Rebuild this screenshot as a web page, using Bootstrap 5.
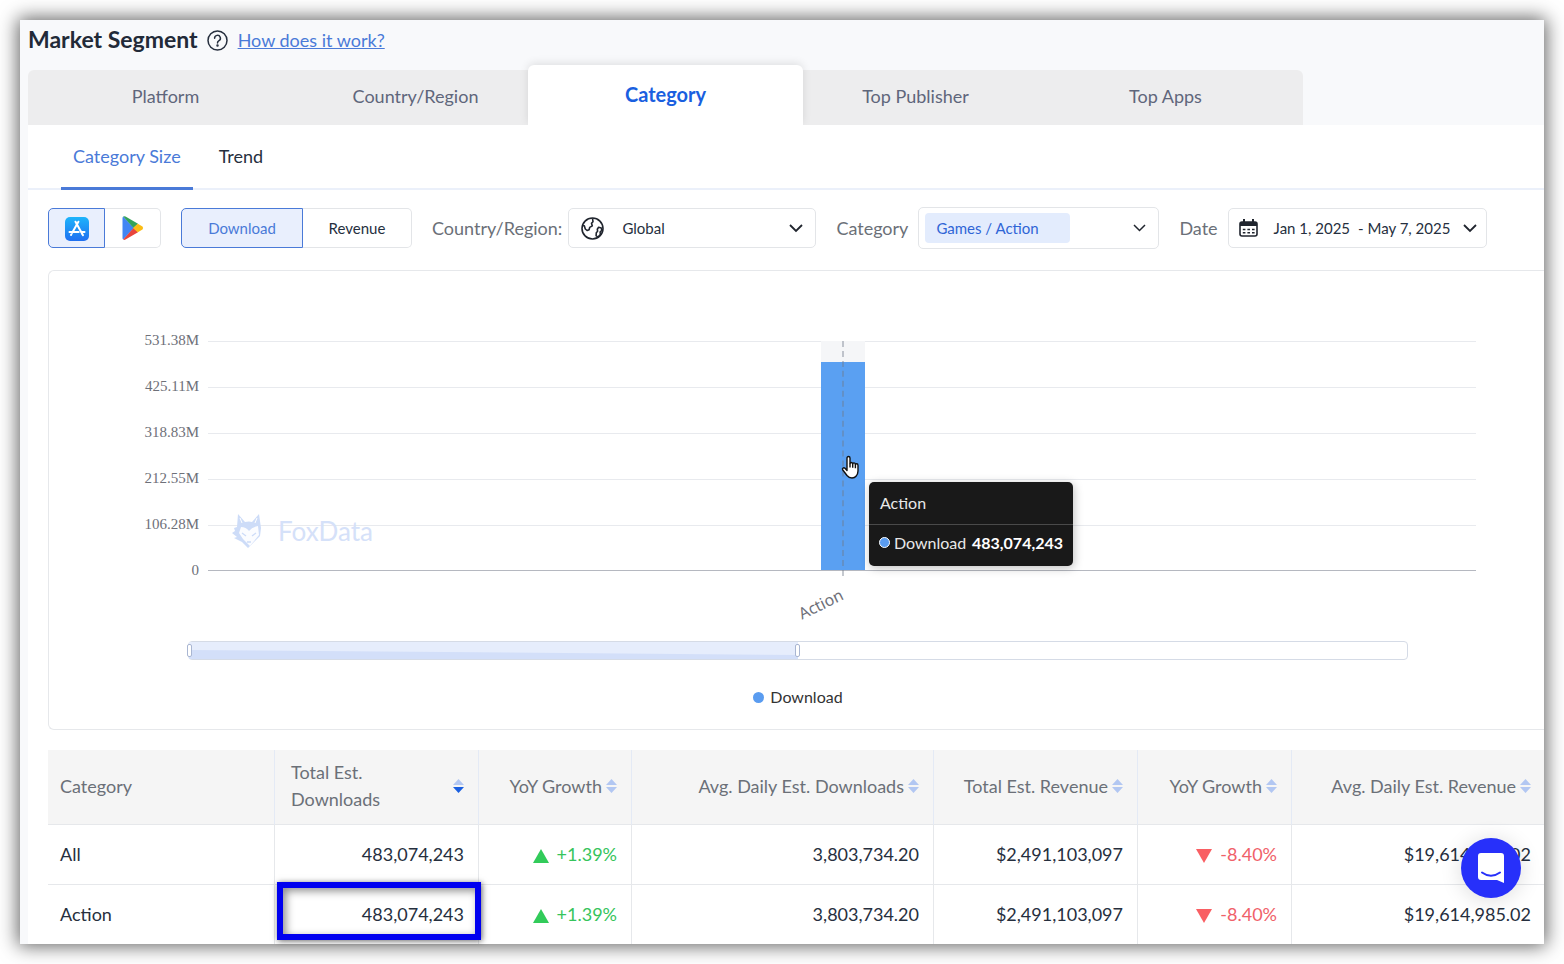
<!DOCTYPE html>
<html lang="en">
<head>
<meta charset="utf-8">
<meta name="viewport" content="width=device-width, initial-scale=1">
<title>Market Segment - FoxData</title>
<link href="https://cdn.jsdelivr.net/npm/bootstrap@5.3.0/dist/css/bootstrap.min.css" rel="stylesheet">
<style>
body { font-family: Lato, "Noto Sans", sans-serif; font-size: 18px; color: #262f3e; padding: 20px; }
.app-frame { background: #f8f9fb; box-shadow: 0 0 18px 2px rgba(0,0,0,.62); }
.page-head { height: 50px; padding: 0 8px; padding-bottom: 10px; }
.page-title { font-size: 23px; font-weight: 700; color: #222a38; margin: 0 9px 0 0; }
.help-link { color: #4a7ad8; font-size: 18px; margin-left: 10px; }
.seg-tabs { margin-left: 8px; height: 55px; width: 1275px; max-width: 100%; background: #ededee; border-radius: 6px 6px 0 0; }
.seg-tab { width: 250px; border: 0; background: none; color: #5f667b; font-size: 18px; padding: 0 0 2px; }
.seg-tab.before { padding-left: 25px; }
.seg-tab.after { padding-right: 25px; }
.seg-tab.active { width: 275px; height: 60px; background: #fff; color: #1a5fe0; font-size: 20px; font-weight: 700; border-radius: 6px 6px 0 0; box-shadow: 0 -2px 8px rgba(0,0,0,.1); clip-path: inset(-10px -10px 0 -10px); }
.panel { margin-left: 8px; background: #fff; }
.sub-tabs { height: 65px; border-bottom: 2px solid #ebf0fa; padding-left: 33px; gap: 14px; }
.sub-tab { border: 0; border-bottom: 3px solid transparent; background: none; padding: 0 12px; font-size: 18px; color: #262f3e; height: 65px; }
.sub-tab.active { color: #4a7ad8; border-color: #4a7ad8; }
.content { padding-left: 20px; }
.filters { padding: 17px 0 21px; font-size: 15px; }
.filters .btn-set { margin-right: 20px; }
.filters .field-label { font-size: 18px; color: #6b7078; white-space: nowrap; margin-right: 10px; }
.filters .field-label.tight { margin-right: 6px; }
.seg-btn { height: 40px; border: 1px solid #e3e5e8; background: #fff; color: #262f3e; font-size: 15px; padding: 0; }
.seg-btn.on { background: #e9effd; border-color: #4a7ad8; color: #4a7ad8; }
.seg-btn:first-child { border-radius: 5px 0 0 5px; }
.seg-btn:last-child { border-radius: 0 5px 5px 0; border-left: 0; }
.store-btn { width: 56px; }
.store-btn.on { width: 57px; }
.dl-btn { width: 122px; }
.rev-btn { width: 109px; }
.field-box { border: 1px solid #e3e5e8; border-radius: 5px; background: #fff; height: 40px; color: #262f3e; font-size: 15px; }
.field-box.country-box, .field-box.cat-box, .field-box.date-box { flex-shrink: 0; }
.plain-select { appearance: none; border: 0; background: none; color: inherit; outline: 0; }
.country-box { width: 248px; padding: 0 12px; gap: 18px; margin-right: 20px; }
.cat-box { width: 241px; height: 42px; padding: 0 12px 0 6px; margin-right: 20px; }
.chip-select { width: 145px; height: 30px; border-radius: 4px; background: #e3ecfd; color: #2f65d6; padding: 0 11px; }
.date-box { width: 259px; padding: 0 9px 0 10px; }
.chart-card { height: 460px; border: 1px solid #e6e8eb; border-right: 0; border-radius: 6px 0 0 6px; padding: 70px 68px 0 90px; }
.y-axis { width: 61px; height: 230px; font: 15px/18px "Liberation Serif", serif; color: #6e7079; padding-right: 1px; }
.y-axis div, .grid-row { height: 46px; }
.y-axis { margin-top: -10px; margin-bottom: 10px; }
.plot { height: 230px; }
.grid-row { border-top: 1px solid #e8eaee; }
.grid-row.base { border-bottom: 1px solid #b5b8c0; }
.bar-band { width: 44px; height: 229px; left: calc(50% - 21px); top: 0; background: #f5f6f8; }
.bar-fill { background: #5aa0f2; width: 100%; }
.bar-pointer { left: 21px; top: 0; height: 235px; border-left: 2px dashed rgba(110,120,135,.4); }
.bar-label { left: calc(50% - 45px); top: 253px; font: 16px/20px "Noto Sans", sans-serif; color: #6e7079; transform: rotate(-26deg); }
.hand { left: calc(50% - 1px); top: 114px; }
.tip { left: calc(50% + 27px); top: 141px; width: 204px; height: 84px; background: #191919; color: #e8e8e8; font-size: 16px; border-radius: 5px; box-shadow: 1px 2px 10px rgba(0,0,0,.25); }
.tip-head { height: 43px; border-bottom: 1px solid #4a4a4a; padding: 0 11px; }
.tip-body { height: 35px; padding: 0 10px; }
.tip-body strong { color: #fff; }
.dot { width: 11px; height: 11px; border-radius: 50%; background: #5a9cf0; display: inline-block; }
.tip .dot { border: 1px solid #fff; margin-right: 4px; }
.watermark { left: 24px; top: 170px; color: #d5e1f9; font-size: 26px; line-height: 40px; gap: 14px; }
.zoom-bar { margin: 70px 68px 0 49px; height: 19px; border: 1px solid #d5dbe6; border-radius: 4px; }
.zoom-fill { width: 50%; height: 17px; background: #e6edfc; }
.zoom-area { height: 9px; top: 8px; left: 0; right: 0; background: #d3dff9; clip-path: polygon(0 0, 100% 55%, 100% 100%, 0 100%); }
.zoom-handle { width: 5px; height: 13px; top: 2px; border: 1px solid #a9b6d2; background: #fff; border-radius: 2px; }
.zoom-handle.at-start { left: -2px; }
.zoom-handle.at-end { right: -2px; }
.legend-row { margin: 26px 68px 0 49px; font-size: 16px; line-height: 22px; gap: 6px; color: #333; }
.seg-table { table-layout: fixed; width: 100%; margin-top: 20px; border-collapse: separate; border-spacing: 0; }
.seg-table th { height: 75px; background: #f5f5f5; color: #6b7078; font-weight: 400; line-height: 27px; border-bottom: 1px solid #e6e8eb; border-right: 1px solid #e4eaf5; padding: 0 14px 2px 12px; white-space: nowrap; }
.seg-table td { height: 60px; border-bottom: 1px solid #e6e8eb; border-right: 1px solid #e6e8eb; padding: 0 14px 1px 12px; text-align: right; }
.seg-table tr:last-child td { height: 59px; border-bottom: 0; }
.seg-table td:first-child { text-align: left; }
.seg-table th:last-child, .seg-table td:last-child { border-right: 0; padding-right: 13px; }
.sort-btn { border: 0; background: none; padding: 0; color: inherit; width: 100%; text-align: right; display: flex; align-items: center; justify-content: flex-end; gap: 4px; }
.up-text { color: #36c45c; }
.down-text { color: #f0616a; }
.cell-mark { border: 6px solid #0000f0; left: 2px; top: -3px; right: -3px; height: 58px; box-shadow: 1px 1px 6px rgba(0,0,0,.6), inset 3px 3px 8px rgba(0,0,0,.45); pointer-events: none; }
.chat-btn { width: 60px; height: 60px; right: 23px; bottom: 46px; border: 0; padding: 0; border-radius: 50%; background: #2730fa; box-shadow: 0 2px 22px rgba(0,0,0,.14); }
</style>
</head>
<body>
<main class="app-frame position-relative">
  <header class="page-head d-flex align-items-center">
    <h1 class="page-title">Market Segment</h1>
    <svg width="21" height="21" viewBox="0 0 21 21" fill="none" stroke="#262f3e" stroke-width="1.5" stroke-linecap="round"><circle cx="10.500" cy="10.500" r="9.500"/><path d="M7.600 8.300a2.900 2.900 0 1 1 4.400 2.400c-1 .6-1.500 1.100-1.500 2.200"/><circle cx="10.500" cy="15.500" r=".5" fill="#262f3e"/></svg>
    <a class="help-link" href="#">How does it work?</a>
  </header>
  <nav class="seg-tabs d-flex align-items-end" aria-label="Segment">
    <button class="seg-tab before h-100">Platform</button>
    <button class="seg-tab before h-100">Country/Region</button>
    <button class="seg-tab active">Category</button>
    <button class="seg-tab after h-100">Top Publisher</button>
    <button class="seg-tab after h-100">Top Apps</button>
  </nav>
  <section class="panel">
    <div class="sub-tabs d-flex">
      <button class="sub-tab active">Category Size</button>
      <button class="sub-tab">Trend</button>
    </div>
    <div class="content">
      <div class="filters d-flex align-items-center">
        <div class="btn-set d-flex">
          <button class="seg-btn store-btn on" aria-label="App Store">
            <svg width="24" height="24" viewBox="0 0 24 24"><defs><linearGradient id="sky" x2="0" y2="1"><stop stop-color="#1db4fb"/><stop offset="1" stop-color="#1f6ff0"/></linearGradient></defs><rect width="24" height="24" rx="5" fill="url(#sky)"/><g stroke="#fff" stroke-width="2" stroke-linecap="round" fill="none"><path d="M10.500 4.700l6.800 12.200"/><path d="M13.400 4.700L7.200 15.700"/><path d="M4.500 15h9.200M16.700 15h2.800"/><path d="M6 18l.4-.7M17.600 17.500l.4.700"/></g></svg>
          </button>
          <button class="seg-btn store-btn" aria-label="Google Play">
            <svg width="24" height="26" viewBox="0 0 24 26"><path d="M2.200 1.500Q1.500 2 1.500 3v20q0 1 .7 1.500L13 13z" fill="#4285f4"/><path d="M2.200 1.500Q3.200.8 4.500 1.500L17 8.800 12.500 13z" fill="#34a35a"/><path d="M2.200 24.500q1 .8 2.300 0L17 17.200 12.500 13z" fill="#e8453c"/><path d="M16.800 8.700l4.700 2.900q1.300 1.400 0 2.800l-4.700 2.900L12 13z" fill="#fbbc14"/></svg>
          </button>
        </div>
        <div class="btn-set d-flex">
          <button class="seg-btn dl-btn on">Download</button>
          <button class="seg-btn rev-btn">Revenue</button>
        </div>
        <label class="field-label tight" for="country">Country/Region:</label>
        <div class="field-box country-box d-flex align-items-center">
          <svg class="flex-shrink-0" width="23" height="23" viewBox="0 0 23 23" fill="none" stroke="#20252e" stroke-width="1.600" stroke-linejoin="round"><circle cx="11.500" cy="11.500" r="10.500"/><path d="M1.300 8.500l2 .3 1 3.200 1.800 1.500 2-.8.600-2.300 2.600-1.500-.8-2.600 1.500-1.600-.5-3.300"/><path d="M17.600 10.300l2.700.7.500 2.400-1.700 1.600.3 2.500-2.300 2.600-2-1.400.2-3 1.300-1.500-.3-2z"/></svg>
          <select class="plain-select flex-grow-1" id="country"><option>Global</option></select>
          <svg width="14" height="9" viewBox="0 0 14 9" fill="none" stroke="#20252e" stroke-width="1.800"><path d="M1 1l6 6 6-6"/></svg>
        </div>
        <label class="field-label" for="cat">Category</label>
        <div class="field-box cat-box d-flex align-items-center justify-content-between">
          <select class="plain-select chip-select" id="cat"><option>Games / Action</option></select>
          <svg width="13" height="8" viewBox="0 0 13 8" fill="none" stroke="#20252e" stroke-width="1.500"><path d="M1 1l5.500 5.500L12 1"/></svg>
        </div>
        <label class="field-label" for="date">Date</label>
        <button class="field-box date-box d-flex align-items-center" id="date">
          <svg class="me-3" width="19" height="18" viewBox="0 0 19 18"><rect x="1" y="3" width="17" height="14" rx="2" fill="none" stroke="#20252e" stroke-width="1.600"/><path d="M1 3h17v4H1zM4 0h2v4H4zM13 0h2v4h-2z" fill="#20252e"/><path d="M3.800 10.500h11.800M3.800 13.700h11.800" stroke="#20252e" stroke-width="1.500" stroke-dasharray="2.600 2"/></svg>
          <span class="me-2">Jan 1, 2025</span><span>- May 7, 2025</span>
          <svg class="ms-auto" width="14" height="9" viewBox="0 0 14 9" fill="none" stroke="#20252e" stroke-width="1.800"><path d="M1 1l6 6 6-6"/></svg>
        </button>
      </div>

      <div class="chart-card">
        <div class="d-flex">
          <div class="y-axis text-end"><div>531.38M</div><div>425.11M</div><div>318.83M</div><div>212.55M</div><div>106.28M</div><div>0</div></div>
          <div class="plot flex-grow-1 position-relative ms-2">
            <div class="position-absolute watermark d-flex align-items-center">
              <svg width="32" height="36" viewBox="0 0 32 36" fill="none" stroke="#cddcf8" stroke-linejoin="round"><path d="M6 1l7 8q4-1 7 0l7-8 2 14-1 8-6 6-6 6-6-6-8-4 3-1-5-4 3-2-1-3 3-1z" fill="#cddcf8" stroke="none"/><path d="M9 14q5 0 8 4 3-4 9-5l1 9-9 11-7-7-4-6z" fill="#fbfcff" stroke="none"/><path d="M10 20l4 3M24 20l-4 3M15 29h4" stroke-width="1.300"/><path d="M8 5l2 5M25 5l-2 5" stroke="#fff"/></svg>
              <span>FoxData</span>
            </div>
            <div class="grid-row"></div><div class="grid-row"></div><div class="grid-row"></div><div class="grid-row"></div><div class="grid-row base"></div>
            <div class="position-absolute bar-band d-flex align-items-end"><div class="bar-fill" style="height:91%"></div><div class="position-absolute bar-pointer"></div></div>
            <div class="position-absolute bar-label">Action</div>
            <svg class="position-absolute hand" width="20" height="26" viewBox="0 0 20 26" fill="#fff" stroke="#111" stroke-width="1.400" stroke-linejoin="round"><path d="M6 15.500V3q0-1.500 1.500-1.500T9 3v5.500q.2-1 1.300-1t1.400 1.300q.3-.9 1.300-.9 1.200 0 1.400 1.500.3-.6 1.300-.6 1.300 0 1.300 1.700V16q0 3-2 5.300-1.300 1.700-4 1.700-3 0-5-2.500L1.800 15q-.8-1.200.2-1.900t2 .2z"/><path d="M9 8.500v4M11.700 8.800v4M14.400 9.600v3.600" fill="none"/></svg>
            <div class="position-absolute tip">
              <div class="tip-head d-flex align-items-center">Action</div>
              <div class="tip-body d-flex align-items-center"><span class="dot"></span>Download<strong class="ms-auto">483,074,243</strong></div>
            </div>
          </div>
        </div>
        <div class="zoom-bar position-relative"><div class="zoom-fill position-relative"><div class="position-absolute zoom-area"></div><div class="position-absolute zoom-handle at-start"></div><div class="position-absolute zoom-handle at-end"></div></div></div>
        <div class="legend-row d-flex justify-content-center align-items-center"><span class="dot"></span>Download</div>
      </div>

      <table class="seg-table">
        <colgroup><col style="width:227px"><col style="width:204px"><col style="width:153px"><col style="width:302px"><col style="width:204px"><col style="width:154px"><col style="width:252px"></colgroup>
        <thead><tr>
          <th>Category</th>
          <th><button class="sort-btn justify-content-between"><span class="text-start ms-1">Total Est.<br>Downloads</span><svg width="11" height="16" viewBox="0 0 11 16"><path d="M0 7l5.500-6L11 7z" fill="#b2c7f2"/><path d="M0 9l5.500 6L11 9z" fill="#1a5fe0"/></svg></button></th>
          <th><button class="sort-btn">YoY Growth<svg width="11" height="16" viewBox="0 0 11 16" fill="#b2c7f2"><path d="M0 7l5.500-6L11 7zM0 9l5.500 6L11 9z"/></svg></button></th>
          <th><button class="sort-btn">Avg. Daily Est. Downloads<svg width="11" height="16" viewBox="0 0 11 16" fill="#b2c7f2"><path d="M0 7l5.500-6L11 7zM0 9l5.500 6L11 9z"/></svg></button></th>
          <th><button class="sort-btn">Total Est. Revenue<svg width="11" height="16" viewBox="0 0 11 16" fill="#b2c7f2"><path d="M0 7l5.500-6L11 7zM0 9l5.500 6L11 9z"/></svg></button></th>
          <th><button class="sort-btn">YoY Growth<svg width="11" height="16" viewBox="0 0 11 16" fill="#b2c7f2"><path d="M0 7l5.500-6L11 7zM0 9l5.500 6L11 9z"/></svg></button></th>
          <th><button class="sort-btn">Avg. Daily Est. Revenue<svg width="11" height="16" viewBox="0 0 11 16" fill="#b2c7f2"><path d="M0 7l5.500-6L11 7zM0 9l5.500 6L11 9z"/></svg></button></th>
        </tr></thead>
        <tbody>
          <tr><td>All</td><td>483,074,243</td>
            <td class="up-text"><svg class="me-2" width="16" height="14" viewBox="0 0 16 14"><path d="M0 14L8 0l8 14z" fill="#32cb5a"/></svg>+1.39%</td>
            <td>3,803,734.20</td><td>$2,491,103,097</td>
            <td class="down-text"><svg class="me-2" width="16" height="14" viewBox="0 0 16 14"><path d="M0 0l8 14 8-14z" fill="#f95f63"/></svg>-8.40%</td>
            <td>$19,614,985.02</td></tr>
          <tr><td>Action</td><td class="position-relative">483,074,243<div class="position-absolute cell-mark"></div></td>
            <td class="up-text"><svg class="me-2" width="16" height="14" viewBox="0 0 16 14"><path d="M0 14L8 0l8 14z" fill="#32cb5a"/></svg>+1.39%</td>
            <td>3,803,734.20</td><td>$2,491,103,097</td>
            <td class="down-text"><svg class="me-2" width="16" height="14" viewBox="0 0 16 14"><path d="M0 0l8 14 8-14z" fill="#f95f63"/></svg>-8.40%</td>
            <td>$19,614,985.02</td></tr>
        </tbody>
      </table>
    </div>
  </section>
  <button class="chat-btn position-absolute" aria-label="Open chat">
    <svg width="28" height="32" viewBox="0 0 28 32"><path d="M4 1h20q3 0 3 3v27l-7-3H4q-3 0-3-3V4q0-3 3-3z" fill="#fff"/><path d="M5 20.500q9 6.500 18 0" fill="none" stroke="#2730fa" stroke-width="2" stroke-linecap="round"/></svg>
  </button>
</main>
<script src="https://cdn.jsdelivr.net/npm/bootstrap@5.3.0/dist/js/bootstrap.bundle.min.js"></script>
</body>
</html>
